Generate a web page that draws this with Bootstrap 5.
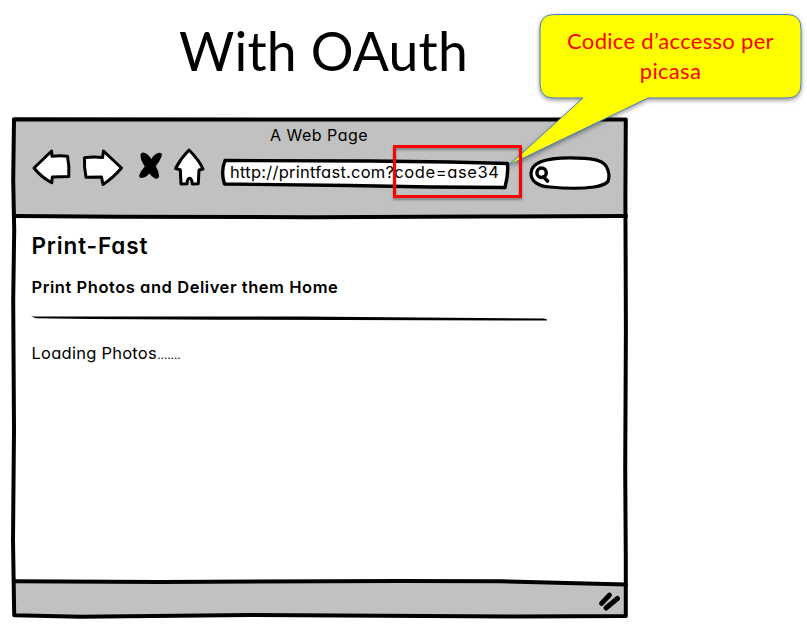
<!DOCTYPE html>
<html lang="it">
<head>
<meta charset="utf-8">
<meta name="viewport" content="width=device-width, initial-scale=1">
<title>With OAuth</title>
<link href="https://cdn.jsdelivr.net/npm/bootstrap@5.3.0/dist/css/bootstrap.min.css" rel="stylesheet">
<style>
  body { width: 807px; height: 632px; background: #fff; color: #000; font-family: Lato, "Liberation Sans", sans-serif; }
  svg { display: block; overflow: visible; }
  .slide-head { height: 116px; padding: 17px 0 0 179px; }
  .slide-title { font-size: 53.5px; line-height: 66px; letter-spacing: .2px; font-weight: 400; }
  .sketch { width: 618px; height: 504px; margin-left: 11px; font-family: Inter, "Liberation Sans", sans-serif; font-feature-settings: "cv11"; }
  .sketch-frame { position: absolute; inset: 0; }
  .sketch-bar { height: 100px; }
  .tab-title { height: 30px; padding: 7px 2px 0 0; font-size: 16px; line-height: 24px; letter-spacing: .5px; }
  .tools { padding-left: 21px; }
  .tools .fwd { margin-left: 10px; }
  .tools .stop { margin-left: 13px; }
  .tools .home { margin-left: 10px; }
  .address { width: 291px; height: 52px; margin-left: 14px; }
  .address-shape { position: absolute; inset: 0; }
  .address-text { padding: 14px 0 0 10px; font-size: 16.5px; line-height: 24px; white-space: nowrap; }
  .host { letter-spacing: .25px; }
  .code { letter-spacing: .6px; }
  .find { margin-left: 17px; }
  .page-body { padding: 16px 0 0 20.5px; }
  .site-name { font-size: 22.5px; line-height: 28px; font-weight: 600; letter-spacing: .85px; }
  .tagline { font-size: 16.5px; line-height: 24px; font-weight: 600; letter-spacing: .55px; padding-top: 15px; }
  .divider { margin: 17px 0 0 -1px; }
  .status { font-size: 16.5px; line-height: 24px; letter-spacing: .25px; padding-top: 21px; }
  .dots { font-size: 14px; font-weight: 300; letter-spacing: -.6px; }
  .callout { position: absolute; left: 500px; top: 0; width: 307px; height: 210px; }
  .callout-shape { position: absolute; inset: 0; filter: drop-shadow(0 2px 2px rgba(0,0,0,.4)); }
  .callout-text { padding: 26px 0 0 40px; width: 301px; color: #f00; font-size: 22px; line-height: 30px; letter-spacing: .3px; }
  .marker { position: absolute; left: 393px; top: 145px; width: 128.5px; height: 52.5px; border: 3px solid #f00; filter: drop-shadow(0 2px 1px rgba(0,0,0,.35)); }
</style>
<script src="https://cdn.jsdelivr.net/npm/bootstrap@5.3.0/dist/js/bootstrap.bundle.min.js"></script>
</head>
<body class="position-relative overflow-hidden m-0">
  <header class="slide-head">
    <h1 class="slide-title m-0">With OAuth</h1>
  </header>

  <main class="sketch position-relative d-flex flex-column">
    <svg class="sketch-frame" width="618" height="504" viewBox="11 116 618 504" stroke-linejoin="round" stroke-linecap="round">
      <path d="M14 119.5L626 120V616L200 615.5L80 616.8L14 615.5Z" fill="#fff"/>
      <path d="M14 119.5H626V217H14Z" fill="#c1c1c1"/>
      <path d="M14 581L160 582L500 581L626 584.5V616L250 615.5L80 616.8L14 615.5Z" fill="#c1c1c1"/>
      <path d="M14 119.3Q200 119 330 119.5T625.8 119.6L625.4 200L625.9 330L625.2 470L625.8 560V616L520 616.5L250 615L80 616.8L14.2 615.3L13 540L14 430L13.2 300L14.2 230L13.2 180Z" fill="none" stroke="#000" stroke-width="4"/>
      <path d="M14 216L120 216.8L310 217.2L480 216.5L626 216M14 581.2L160 582L400 581L500 581.2L626 584.5" fill="none" stroke="#000" stroke-width="4"/>
    </svg>

    <div class="sketch-bar position-relative flex-shrink-0">
      <div class="tab-title text-center">A Web Page</div>
      <div class="tools d-flex align-items-start">
        <svg width="40" height="52" viewBox="32 146 40 52" fill="#fff" stroke="#000" stroke-width="3" stroke-linejoin="round" role="img" aria-label="Back"><path d="M34 168L51.6 151L52 156.3Q60 155.3 67.5 156.2Q69.5 166 68.8 176.6L52.3 177L51.8 182.8Q41 177 34 168Z"/></svg>
        <svg class="fwd" width="42" height="52" viewBox="82 146 42 52" fill="#fff" stroke="#000" stroke-width="3" stroke-linejoin="round" role="img" aria-label="Forward"><path d="M84.5 157.8Q93 156.4 102.6 157.5L103.5 151L121.5 168Q113 178 103 184.5L101.5 177L86 177.2Q84 167 84.5 157.8Z"/></svg>
        <svg class="stop" width="26" height="52" viewBox="137 146 26 52" role="img" aria-label="Stop"><path d="M140.500 154Q142.500 151 147 154Q149.800 156.500 151.300 159Q154.500 153.500 159 152.800Q162.500 152.500 161.700 156Q160 161.500 155.800 166Q158.800 171 159.200 176.500Q158.500 179.500 154.500 178.300Q151.500 176.500 149.500 173.500Q146 177.500 141.500 178Q138.800 178 139.300 175Q141 170.500 144.800 166.500Q140 159.500 140.500 154Z"/></svg>
        <svg class="home" width="33" height="52" viewBox="173 146 33 52" fill="#fff" stroke="#000" stroke-width="3" stroke-linejoin="round" role="img" aria-label="Home"><path d="M189 150Q181 158 175.500 168.500L180.300 169.800L181 184L187 183.800Q187.300 178.500 189.500 178.300Q192 178.500 192.300 184L198.300 183.700L199 170L203 169Q199 160 189 150Z"/></svg>
        <div class="address position-relative">
          <svg class="address-shape" width="291" height="52" viewBox="220 146 291 52"><path d="M225 160.500L370 161L450 162L507.500 163.500Q508.500 174 505 187.500L430 187L350 185.500L224.500 184Q220.500 172 225 160.500Z" fill="#fff" stroke="#000" stroke-width="3.400" stroke-linejoin="round"/></svg>
          <div class="address-text position-relative"><span class="host">http://printfast.com?</span><span class="code">code=ase34</span></div>
        </div>
        <svg class="find" width="84" height="52" viewBox="528 146 84 52" fill="#fff" stroke="#000" stroke-width="3.200" role="img" aria-label="Search"><path d="M531 173.500C531 163 545 157.800 570 157.800C592 157.800 602 160 606 166C609 171 609.500 177 608 181.500Q604 185.500 594 187Q575 189.500 550 187C538 186.500 531 181 531 173.500Z"/><circle cx="541.600" cy="172.800" r="4.700" stroke-width="3.500"/><path d="M543.500 177L547.500 181" stroke-width="3.600" stroke-linecap="round"/></svg>
      </div>
    </div>

    <section class="page-body position-relative flex-grow-1">
      <h2 class="site-name m-0">Print-Fast</h2>
      <div class="tagline">Print Photos and Deliver them Home</div>
      <svg class="divider" width="516" height="4" viewBox="31 316 516 4"><path d="M31 316.500L300 316.500L450 317.800L544 318.500L547 319.500V320.500L430 320.200L220 319.700L90 319L36 318.300Z"/></svg>
      <div class="status">Loading Photos<span class="dots">.......</span></div>
    </section>

    <svg class="position-absolute bottom-0 end-0" width="34" height="36" viewBox="595 584 34 36" stroke="#000" stroke-linecap="round"><path d="M601.500 603.500L609.500 595" stroke-width="4.800"/><path d="M606 608L617.500 598.500" stroke-width="5"/></svg>
  </main>

  <aside class="callout">
    <svg class="callout-shape" width="307" height="210" viewBox="500 0 307 210"><path d="M554 14.500H787Q801 14.500 801 28.500V84Q801 98 787 98H648L509 165L583 98H554Q540 98 540 84V28.500Q540 14.500 554 14.500Z" fill="#ff0" stroke="#4a7ebb"/></svg>
    <div class="callout-text text-center position-relative">Codice d’accesso per<br>picasa</div>
  </aside>
  <div class="marker"></div>
</body>
</html>
